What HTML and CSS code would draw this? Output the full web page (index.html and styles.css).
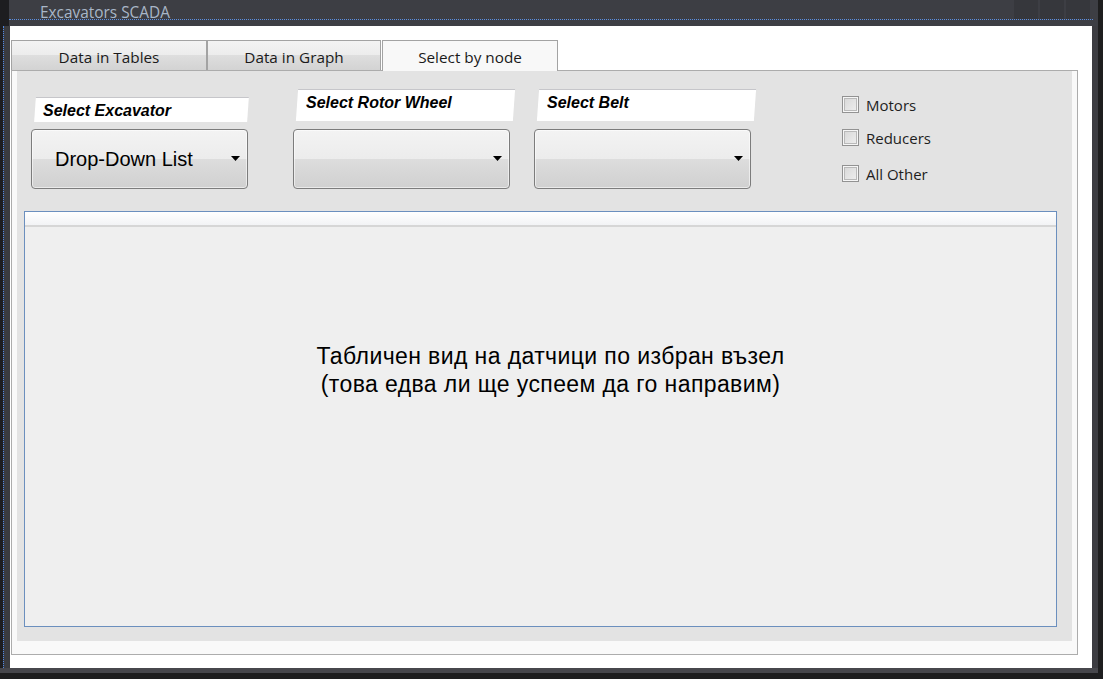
FILE: index.html
```html
<!DOCTYPE html>
<html lang="bg">
<head>
<meta charset="utf-8">
<title>Excavators SCADA</title>
<link rel="stylesheet" href="styles.css">
</head>
<body>
<div class="screen">
  <div class="titlebar">
    <div class="titlerow">
      <div class="title">Excavators SCADA</div>
      <div class="winbtns"><span></span><span></span><span></span></div>
    </div>
    <div class="sel-top"></div>
  </div>
  <div class="middle">
    <div class="gutter-l"><div class="dots"></div></div>
    <div class="client">
      <div class="tabs">
        <div class="tab tab-1">Data in Tables</div>
        <div class="tab tab-2">Data in Graph</div>
        <div class="tab tab-3 active">Select by node</div>
      </div>
      <div class="panel">
        <div class="area">
          <div class="controls">
            <div class="col col-exc">
              <div class="lbl lbl-exc"><span>Select Excavator</span></div>
              <div class="dd dd-exc"><span class="dd-txt">Drop-Down List</span><span class="arrow"></span></div>
            </div>
            <div class="col col-rotor">
              <div class="lbl lbl-big"><span>Select Rotor Wheel</span></div>
              <div class="dd"><span class="dd-txt"></span><span class="arrow"></span></div>
            </div>
            <div class="col col-belt">
              <div class="lbl lbl-big"><span>Select Belt</span></div>
              <div class="dd"><span class="dd-txt"></span><span class="arrow"></span></div>
            </div>
            <div class="col col-checks">
              <label class="cb cb-1"><span class="box"></span>Motors</label>
              <label class="cb cb-2"><span class="box"></span>Reducers</label>
              <label class="cb cb-3"><span class="box"></span>All Other</label>
            </div>
          </div>
          <div class="grid">
            <div class="grid-head"></div>
            <div class="grid-body">
              <p>Табличен вид на датчици по избран възел<br>(това едва ли ще успеем да го направим)</p>
            </div>
          </div>
        </div>
      </div>
    </div>
    <div class="gutter-r"></div>
  </div>
  <div class="bottom"></div>
</div>
</body>
</html>
```
FILE: styles.css
```css
* { box-sizing: border-box; margin: 0; padding: 0; }

body {
  width: 1103px;
  height: 679px;
  overflow: hidden;
  background: #1e1e1f;
  font-family: "Open Sans", "Noto Sans", sans-serif;
}

.screen {
  width: 1103px;
  height: 679px;
  display: flex;
  flex-direction: column;
}

/* ---------- title bar ---------- */
.titlebar {
  width: 1098px;
  height: 26px;
  background: linear-gradient(to right, #1d1d20 0 9px, #3d3e44 9px);
  display: flex;
  flex-direction: column;
}

.titlerow {
  height: 19px;
  display: flex;
}

.title {
  flex: 1;
  height: 19px;
  padding: 3px 0 0 40px;
  font-size: 15.4px;
  line-height: 19px;
  color: #a9b7c8;
  white-space: nowrap;
}

.winbtns {
  display: flex;
  gap: 2px;
  margin-right: 8px;
}

.winbtns span {
  width: 24px;
  height: 19px;
  background: #36373c;
}

.sel-top {
  margin-left: 9px;
  width: 1084px;
  border-top: 1px dotted #5b8fe3;
}

/* ---------- window body ---------- */
.middle {
  display: flex;
  height: 642px;
}

.gutter-l {
  width: 10px;
  background: linear-gradient(to right, #1d1d20 0 3px, #3a3b3f 3px);
  padding-left: 3px;
}

.gutter-l .dots {
  height: 100%;
  border-left: 1px dotted #4f88e6;
}

.client {
  width: 1082px;
  background: #ffffff;
  padding: 14px 0 0 1px;
}

.gutter-r {
  width: 6px;
  background: #3c3c41;
}

.bottom {
  width: 1098px;
  height: 5px;
  background: #47474c;
}

/* ---------- tabs ---------- */
.tabs {
  display: flex;
  height: 30px;
  align-items: flex-start;
}

.tab {
  height: 30px;
  border: 1px solid #a3a3a3;
  border-bottom: none;
  font-size: 15.3px;
  line-height: 20px;
  color: #1a1a1a;
  display: flex;
  justify-content: center;
  padding-top: 6px;
  background: linear-gradient(#f3f3f3, #ececec 50%, #dedede 50%, #d3d3d3);
  white-space: nowrap;
}

.tab-1 { width: 196px; }
.tab-2 { width: 174px; }

.tab-3 {
  width: 176px;
  height: 31px;
  margin-left: 1px;
  background: #f8f8f8;
  position: relative;
  z-index: 1;
}

.panel {
  width: 1067px;
  height: 585px;
  border: 1px solid #acacac;
  background: #f9f9f9;
  padding: 0 5px 13px 5px;
}

.area {
  height: 100%;
  background: #e3e3e3;
  padding: 0 15px 14px 7px;
  display: flex;
  flex-direction: column;
}

/* ---------- controls ---------- */
.controls {
  height: 140px;
  display: flex;
  align-items: flex-start;
}

.col {
  display: flex;
  flex-direction: column;
  align-items: flex-start;
}

.col-exc { margin-left: 7px; }
.col-rotor { margin-left: 45px; }
.col-belt { margin-left: 20px; }
.col-checks { margin-left: 87px; padding-top: 25px; }

.lbl {
  position: relative;
  margin-left: 4px;
  font-family: "Liberation Sans", Arial, sans-serif;
  font-size: 16px;
  font-weight: bold;
  font-style: italic;
  line-height: 19px;
  color: #000;
  white-space: nowrap;
}

.lbl::before {
  content: "";
  position: absolute;
  inset: 0;
  background: #ffffff;
  border-top: 1px solid #c6c6ca;
  transform: skewX(-4deg);
}

.lbl span { position: relative; }

.lbl-exc {
  width: 213px;
  height: 25px;
  margin-top: 26px;
  padding: 4px 0 0 8px;
}

.lbl-big {
  width: 217px;
  height: 32px;
  margin-top: 18px;
  padding: 4px 0 0 9px;
}

.dd {
  width: 217px;
  height: 60px;
  margin-top: 8px;
  border: 1px solid #7c7c7c;
  border-radius: 4px;
  background: linear-gradient(#f3f3f3, #ececec 50%, #dddddd 50%, #d0d0d0);
  box-shadow: inset 0 0 0 1px rgba(255, 255, 255, 0.55);
  display: flex;
  align-items: center;
  padding: 0 7px 0 23px;
  font-family: "Liberation Sans", Arial, sans-serif;
  font-size: 20px;
  color: #000;
}

.dd-exc { margin-top: 7px; }

.dd-txt { flex: 1; white-space: nowrap; }

.arrow {
  width: 9px;
  height: 5px;
  background: #000;
  clip-path: polygon(0 0, 100% 0, 50% 100%);
  margin-top: -1px;
}

/* ---------- checkboxes ---------- */
.cb {
  display: flex;
  align-items: center;
  gap: 7px;
  height: 17px;
  font-size: 15px;
  color: #1e1e1e;
  white-space: nowrap;
}

.cb-2 { margin-top: 16px; }
.cb-3 { margin-top: 19px; }

.box {
  width: 17px;
  height: 17px;
  border: 1px solid #929292;
  background: linear-gradient(135deg, #d6d6d6, #f0f0f0);
  box-shadow: inset 0 0 0 1px #f6f6f6, inset 0 0 0 2px #b9b9b9;
}

/* ---------- grid ---------- */
.grid {
  flex: 1;
  border: 1px solid #6b8fbe;
  background: #efefef;
  display: flex;
  flex-direction: column;
}

.grid-head {
  height: 15px;
  background: linear-gradient(#ffffff, #f2f3f5);
  border-bottom: 2px solid #d6d6d6;
}

.grid-body {
  flex: 1;
  padding: 115px 0 0 20px;
  text-align: center;
  font-family: "Liberation Sans", Arial, sans-serif;
  font-size: 23px;
  letter-spacing: 0.4px;
  line-height: 28px;
  color: #000;
}
```
